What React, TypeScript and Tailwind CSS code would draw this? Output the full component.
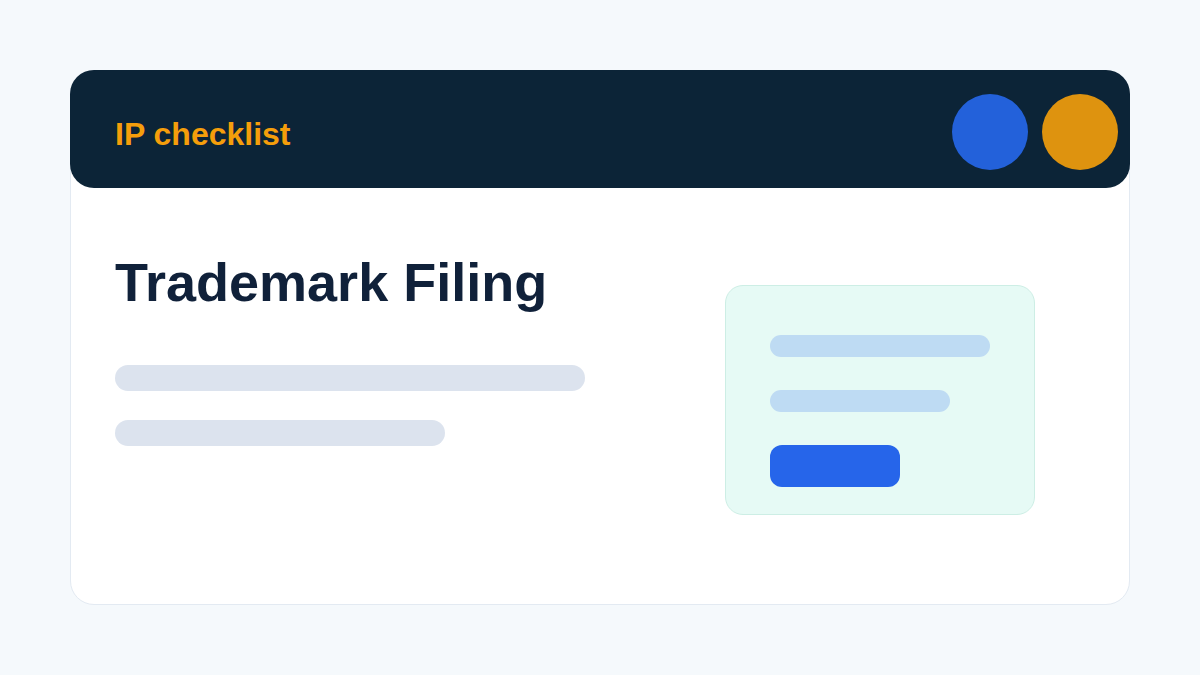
const App = () => {
  return (
    <div className="min-h-screen bg-[#f5f9fc] p-[70px] font-['Liberation_Sans',Arial,sans-serif]">
      <div className="h-[535px] w-[1060px] rounded-[24px] border border-[#e3eaf2] bg-white flex flex-col">
        <div className="-mx-px -mt-px h-[118px] rounded-[24px] bg-[#0c2437] flex items-center justify-between pl-[45px] pr-[12px] pt-[6px]">
          <h2 className="pt-[4px] text-[32px] leading-none font-bold text-[#f59e0b]">IP checklist</h2>
          <div className="flex items-center gap-[14px]">
            <div className="w-[76px] h-[76px] rounded-full bg-[#2361da]" />
            <div className="w-[76px] h-[76px] rounded-full bg-[#de930f]" />
          </div>
        </div>

        <div className="flex flex-1 justify-between pl-[44px] pr-[94px]">
          <div className="pt-[67px] flex flex-col">
            <h1 className="text-[54px] leading-none font-bold text-[#10213a]">Trademark Filing</h1>
            <div className="mt-[56px] h-[26px] w-[470px] rounded-[13px] bg-[#dce3ee]" />
            <div className="mt-[29px] h-[26px] w-[330px] rounded-[13px] bg-[#dce3ee]" />
          </div>

          <div className="mt-[97px] h-[230px] w-[310px] rounded-[18px] border border-[#cdeee5] bg-[#e6faf5] pl-[44px] pt-[49px] flex flex-col">
            <div className="h-[22px] w-[220px] rounded-[11px] bg-[#bedbf3]" />
            <div className="mt-[33px] h-[22px] w-[180px] rounded-[11px] bg-[#bedbf3]" />
            <div className="mt-[33px] h-[42px] w-[130px] rounded-[12px] bg-[#2665ea]" />
          </div>
        </div>
      </div>
    </div>
  );
};

export default App;
